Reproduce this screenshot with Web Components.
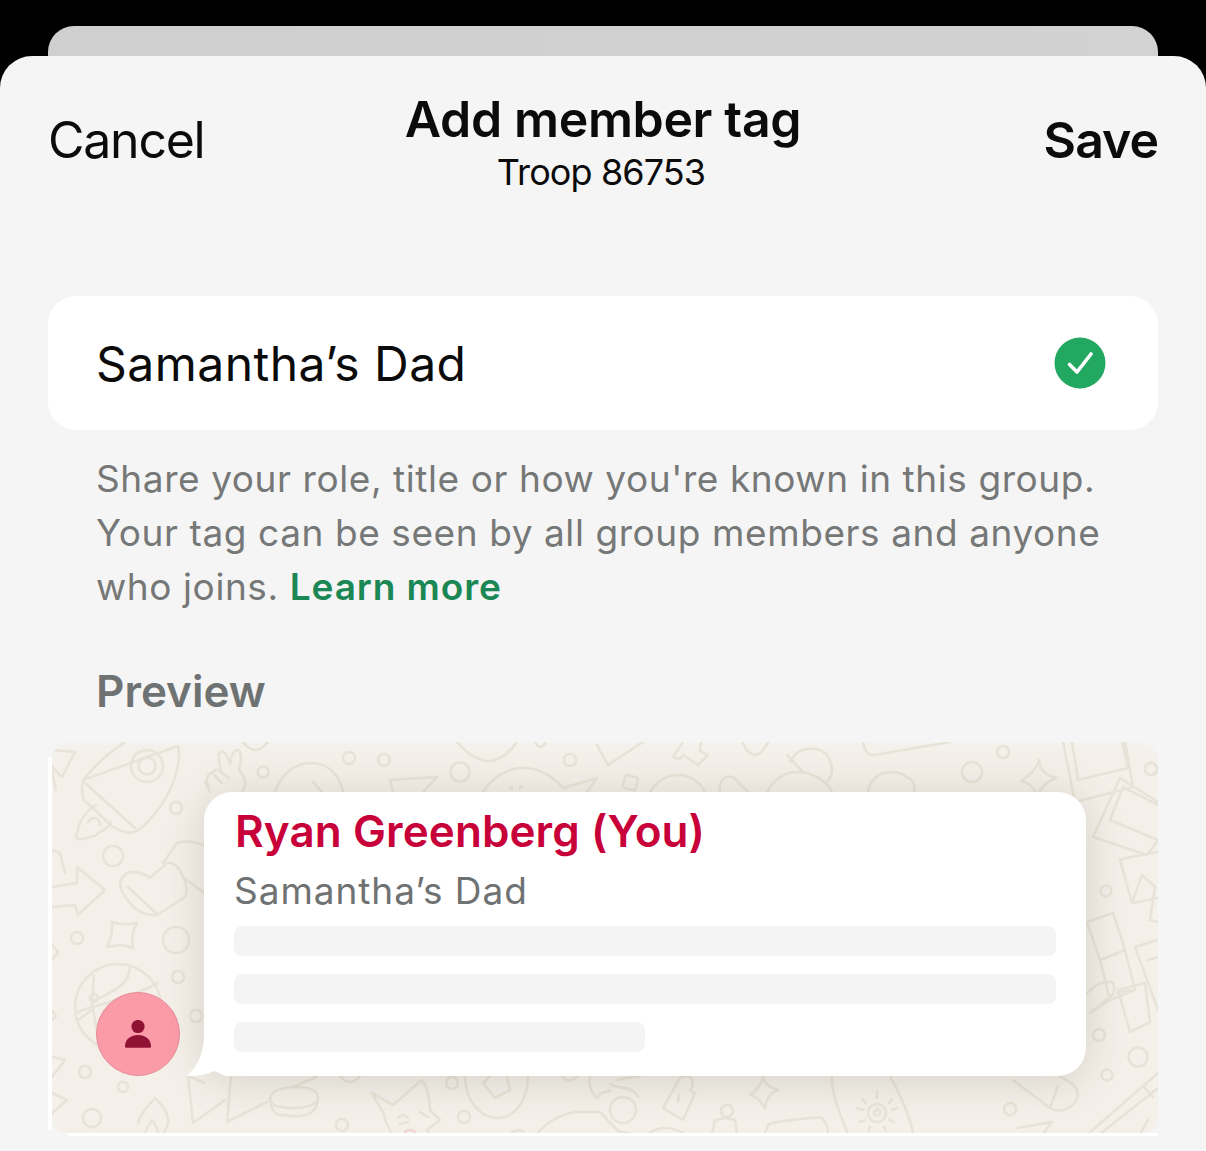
<!DOCTYPE html>
<html lang="en"><head><meta charset="utf-8"><title>Add member tag</title>
<style>
html,body{margin:0;padding:0;background:#000;height:1151px;overflow:hidden;font-family:Inter,"Liberation Sans",sans-serif}
</style></head><body>
<tag-screen>
  <sheet-header slot="header" title-text="Add member tag" sub="Troop 86753"></sheet-header>
  <tag-field value="Samantha’s Dad"></tag-field>
  <help-note>Share your role, title or how you're known in this group.<br>Your tag can be seen by all group members and anyone<br>who joins. <b>Learn more</b></help-note>
  <section-label>Preview</section-label>
  <chat-preview name="Ryan Greenberg (You)" tag="Samantha’s Dad"></chat-preview>
</tag-screen>
<script>
function def(name, html){
  customElements.define(name, class extends HTMLElement{
    constructor(){super();
      const a=this.attachShadow({mode:'open'});
      a.innerHTML=html;
    }
    connectedCallback(){
      const a=this.shadowRoot;
      a.querySelectorAll('[data-attr]').forEach(n=>{n.textContent=this.getAttribute(n.dataset.attr)||''});
    }
  });
}
def('tag-screen',`<style>
:host{display:block;padding-top:26px;height:1125px;overflow:hidden}
.back{height:30px;margin:0 48px;background:linear-gradient(90deg,#cfcfcf,#d2d2d2);border-radius:26px 26px 0 0}
.front{height:1095px;background:#f5f5f5;border-radius:32px 32px 0 0;overflow:hidden}
</style><div class="back"></div><div class="front"><slot name="header"></slot><slot></slot></div>`);

def('sheet-header',`<style>
:host{display:grid;grid-template-columns:1fr auto 1fr;padding:32px 48px 0;height:240px;box-sizing:border-box;align-content:start;align-items:center;color:#0b0b0b}
.c{font-size:50px;line-height:104px;letter-spacing:-1.25px;height:108px}
.s{font-size:50px;line-height:104px;font-weight:600;text-align:right;letter-spacing:-1px;height:108px}
.m{text-align:center}
.t{font-size:50px;line-height:60px;font-weight:600;letter-spacing:-.35px;white-space:nowrap}
.u{font-size:36px;line-height:46px;letter-spacing:-.9px;padding-right:4px}
</style><div class="c">Cancel</div><div class="m"><div class="t" data-attr="title-text"></div><div class="u" data-attr="sub"></div></div><div class="s">Save</div>`);

def('tag-field',`<style>
:host{display:flex;align-items:center;justify-content:space-between;height:134px;margin:0 48px;padding:0 52px 0 48px;box-sizing:border-box;background:#fff;border-radius:28px;color:#0b0b0b}
span{font-size:48px;letter-spacing:.47px;white-space:nowrap}
svg{display:block;width:52px;height:52px}
</style><span data-attr="value"></span><svg viewBox="0 0 52 52"><circle cx="26" cy="26" r="25.500" fill="#23a862"/><path d="M15.500 27.500 23 35 37 17" fill="none" stroke="#fff" stroke-width="3.600" stroke-linecap="round" stroke-linejoin="round"/></svg>`);

def('help-note',`<style>
:host{display:block;margin:22px 48px 0 96px;font-size:37px;line-height:54px;color:#767878;letter-spacing:.58px;white-space:nowrap}
::slotted(b){color:#1a8755;font-weight:600;letter-spacing:.9px}
</style><slot></slot>`);

def('section-label',`<style>
:host{display:block;margin:52px 48px 0 96px;font-size:44px;line-height:50px;font-weight:600;color:#6f7272}
</style><slot></slot>`);

const doodle=`
<g class="d">
<path d="M83 780C95 765 110 752 124 743M178 746C182 765 172 790 160 807C150 820 142 830 133 832C125 834 118 830 112 826L83 799C82 792 82 785 83 780ZM85 783 135 828"/>
<circle cx="147" cy="766" r="16"/><circle cx="147" cy="766" r="8.500"/>
<path d="M96 805C84 812 78 825 76 838 84 842 90 835 95 836 100 830 108 830 111 822M88 822C93 815 100 818 100 825"/>
<path d="M52 750 75 752 62 777 52 767"/>
<path d="M209 786C205 780 207 774 212 773 214 769 219 769 221 772 220 764 217 756 220 752 224 750 228 756 230 764 231 756 234 750 238 750 242 752 241 762 239 770 243 774 246 780 245 786 243 792 240 796 238 798"/>
<path d="M214 775 222 783M221 772 229 778M205 782 210 792"/>
<path d="M243 742Q255 758 268 742"/>
<path d="M275 792C282 772 296 763 312 763 328 763 340 776 343 792M313 782 322 792"/>
<path d="M390 780 437 777 423 792M390 780 393 792"/>
<path d="M457 742Q490 780 517 742"/>
<path d="M483 792C495 774 510 768 524 768 540 768 555 778 563 788L597 778 587 792"/>
<circle cx="511" cy="788" r="1"/><circle cx="521" cy="787" r="1"/>
<path d="M597 745 608 765 643 742"/>
<rect x="624" y="776" width="13" height="13" rx="2" transform="rotate(14 630 782)"/>
<path d="M650 792C658 780 668 775 678 775 690 775 700 782 705 792"/>
<path d="M683 742 673 757 680 759 683 755 698 765 708 755 700 751 701 742"/>
<path d="M720 792C718 780 726 775 733 777L748 792"/>
<path d="M742 742Q755 768 768 742"/>
<path d="M827 782C836 772 832 752 816 749 803 747 795 752 790 762M787 755 803 772M767 792C775 778 786 772 797 772 812 772 826 780 832 792"/>
<path d="M868 792C870 780 880 771 888 773 895 770 905 775 908 778 915 780 915 788 914 792"/>
<path d="M863 742C865 752 868 756 875 755L950 742"/>
<path d="M1063 742 1075 802 1133 787 1125 742M1072 742 1078 780 1128 768 1122 742"/>
<path d="M1039 760C1040 770 1045 775 1056 778 1045 782 1040 788 1038 796 1034 788 1028 782 1021 781 1030 776 1036 770 1039 760Z"/>
<path d="M1093 837 1120 778 1158 802M1158 840 1147 855 1093 837M1110 820 1123 787 1158 805M1158 840 1110 820"/>
<path d="M1120 860C1132 856 1145 855 1157 852M1120 860 1132 903 1158 898M1132 903 1142 875 1155 887 1150 920 1158 922"/>
<path d="M1087 922 1113 913 1125 950 1100 960 1087 922ZM1100 960 1125 950 1135 990 1110 1000 1100 960ZM1118 990 1145 983 1150 1022 1130 1032 1118 990Z"/>
<path d="M1135 947 1157 940M1135 947 1158 1010M1148 960 1158 957"/>
<path d="M1087 993C1095 985 1103 980 1112 982 1116 986 1115 995 1106 1003L1090 1013M1090 1013 1112 995M1117 993 1130 990"/>
<path d="M1013 1080 1050 1108C1060 1114 1074 1108 1077 1098 1080 1088 1072 1082 1060 1077M1050 1108 1058 1086"/>
<path d="M1088 1134 1158 1073M1100 1134 1158 1088M1140 1134 1148 1120M1143 1086 1153 1097"/>
<path d="M1017 1128 1052 1122 1043 1134"/>
<circle cx="1151" cy="769" r="6"/><circle cx="1106" cy="891" r="5.500"/><circle cx="1099" cy="1035" r="6"/><circle cx="1138" cy="1057" r="9.500"/><circle cx="1107" cy="1075" r="5.500"/><circle cx="1010" cy="1109" r="6"/>
<circle cx="972" cy="772" r="10"/><circle cx="1003" cy="752" r="6"/>
<circle cx="263" cy="772" r="5.500"/><circle cx="349" cy="758" r="6"/><circle cx="384" cy="760" r="6"/><circle cx="460" cy="772" r="9.500"/><circle cx="570" cy="760" r="6"/><path d="M535 742Q540 752 546 742"/>
<circle cx="176" cy="808" r="6"/><circle cx="113" cy="856" r="10"/><circle cx="77" cy="938" r="6"/><circle cx="176" cy="940" r="13"/><circle cx="178" cy="977" r="6"/><circle cx="196" cy="1016" r="6"/><circle cx="85" cy="1072" r="6"/><circle cx="123" cy="1087" r="5"/><circle cx="92" cy="1118" r="9"/>
<path d="M52 887 77 883 77 867 105 890 78 915 75 905 52 907"/>
<path d="M120 883C122 875 128 871 135 872 142 873 148 876 150 878L167 863C175 862 181 870 183 877 187 885 188 892 185 897L157 915C145 916 135 910 130 903 124 896 120 890 120 883ZM128 887 157 914M163 863 177 843C185 840 196 842 203 845M183 877 204 893"/>
<path d="M112 922Q122 926 137 923 130 935 133 948 122 943 107 947 113 935 112 922Z"/>
<circle cx="118" cy="1007" r="43"/><path d="M78 1012C92 1005 120 1003 158 983M94 975 92 1002 100 1050M92 1002C115 990 130 985 130 966M78 1020 92 1010"/>
<circle cx="94" cy="998" r="4"/>
<path d="M52 850 60 853 65 873"/><path d="M52 1057 65 1060 52 1077M52 1093 67 1100 52 1113M52 772 56 790M52 945 58 952 52 960M52 1010 56 1016 52 1020"/>
<path d="M138 1123C140 1112 150 1105 155 1098 163 1106 168 1112 168 1120 168 1126 166 1130 163 1134M145 1134C146 1128 150 1124 152 1120 155 1124 158 1128 158 1134"/>
<path d="M188 1076 193 1123 225 1100M231 1076 227 1122 267 1102M188 1076 204 1083"/>
<path d="M270 1099C270 1090 285 1087 295 1087 308 1087 318 1090 318 1098 318 1105 305 1108 295 1108 283 1108 270 1106 270 1099ZM270 1100C272 1112 276 1116 283 1115 295 1117 305 1117 312 1112 316 1108 318 1103 318 1098M293 1087 316 1077"/>
<path d="M340 1076Q350 1088 360 1076"/><circle cx="342" cy="1125" r="6"/>
<circle cx="452" cy="1083" r="6"/><circle cx="464" cy="1117" r="6"/>
<path d="M372 1093 393 1105C405 1095 415 1085 422 1080 428 1088 430 1100 430 1110L440 1120 427 1130 430 1134M372 1093C378 1105 385 1112 385 1120L392 1134M398 1118Q403 1112 408 1118M420 1112 428 1117M400 1124 408 1122"/>
<path d="M405 1132Q410 1128 415 1132" style="stroke:#f2d6d2"/>
<path d="M465 1076C465 1100 480 1118 497 1118 515 1118 528 1100 528 1076M483 1083 495 1098 510 1090 507 1076M483 1083 490 1076"/>
<path d="M562 1076Q570 1085 577 1076"/>
<path d="M590 1076C588 1085 592 1095 598 1098 600 1090 606 1094 610 1090M610 1084C620 1090 632 1085 638 1097M640 1076C630 1078 620 1078 618 1080"/>
<circle cx="623" cy="1110" r="13"/>
<path d="M537 1134C548 1120 565 1112 580 1112L600 1112 618 1131 632 1134"/><path d="M510 1134Q520 1126 525 1134"/>
<path d="M663 1108 677 1083C680 1076 686 1075 690 1077 694 1080 693 1088 690 1090L695 1093 683 1120 663 1108ZM679 1095 678 1102"/>
<path d="M712 1134 715 1120 725 1118 735 1120 737 1134"/><circle cx="727" cy="1111" r="6"/>
<path d="M647 1134Q665 1122 685 1134"/>
<path d="M763 1076C764 1084 770 1088 778 1090 770 1093 766 1100 765 1108 760 1100 755 1095 750 1095 757 1090 762 1084 763 1076Z"/>
<path d="M832 1076C830 1090 840 1115 848 1134M890 1076C900 1095 910 1115 913 1134"/>
<path d="M765 1134 768 1125C770 1122 820 1116 822 1118 826 1122 828 1128 828 1134"/>
<circle cx="877" cy="1113" r="9"/><path d="M877 1108C883 1110 880 1117 875 1115 872 1112 875 1110 877 1111M877 1091v7M862 1099l4 4M892 1099l-3 4M857 1108l6 2M897 1108l-5 2M860 1122l5-2M894 1122l-5-2M868 1131l2-4M886 1131l-2-4"/>
</g>`;

def('chat-preview',`<style>
:host{display:block;position:relative;margin:26px 48px 0;height:394px;overflow:hidden}
.edge{position:absolute;background:#fff}
.el{left:0;top:15px;bottom:6px;width:4px}
.eb{left:20px;right:0;bottom:0;height:3px}
.bg{position:absolute;left:4px;top:0;right:0;height:391px;background:#f4f0e9;border-radius:18px 18px 14px 14px;overflow:hidden;box-shadow:inset 0 4px 8px -2px #f5f5f5}
.bg svg{display:block;width:1106px;height:392px;filter:blur(.6px)}
.d *{fill:none;stroke:#e8e3d8;stroke-width:2.600;stroke-linecap:round;stroke-linejoin:round}
.row{position:relative;display:flex;align-items:flex-end;gap:24px;padding:50px 0 0 48px}
.ava{flex:none;width:84px;height:84px;box-sizing:border-box;border-radius:50%;background:#fb9ba7;border:1px solid #e48d9a;display:flex;align-items:center;justify-content:center}
.ava svg{width:28px;height:28px;display:block}
.bub{position:relative;flex:none;width:882px;height:284px;box-sizing:border-box;padding:14px 30px 0;background:#fff;border-radius:28px;box-shadow:0 4px 40px rgba(60,55,40,.17)}
.tail{position:absolute;left:-18px;bottom:-1px;width:46px;height:48px;display:block}
.n{font-size:44px;line-height:50px;font-weight:600;color:#c8003a;padding-left:1px;letter-spacing:.1px;white-space:nowrap}
.s{font-size:37px;line-height:50px;margin-top:10px;color:#6f7272;letter-spacing:.95px;white-space:nowrap}
.b{height:30px;background:#f4f4f4;border-radius:8px;margin-top:18px}
.s + .b{margin-top:10px}
.b.h{width:411px}
</style>
<div class="edge el"></div><div class="edge eb"></div>
<div class="bg"><svg viewBox="52 742 1106 392">${doodle}</svg></div>
<div class="row">
  <div class="ava"><svg viewBox="0 0 28 28"><circle cx="14" cy="6.500" r="6.600" fill="#8f1234"/><path d="M1 26.500C1 19 7 15 14 15S27 19 27 26.500C27 27.300 26.500 27.700 25.800 27.700H2.200C1.500 27.700 1 27.300 1 26.500Z" fill="#8f1234"/></svg></div>
  <div class="bub">
    <svg class="tail" viewBox="0 0 46 48"><path d="M18 0C19 22 12 39 0 47 12 47 20 46 28 42L40 47H46V0Z" fill="#fff"/></svg>
    <div class="n" data-attr="name"></div>
    <div class="s" data-attr="tag"></div>
    <div class="b"></div><div class="b"></div><div class="b h"></div>
  </div>
</div>`);
</script>
</body></html>
